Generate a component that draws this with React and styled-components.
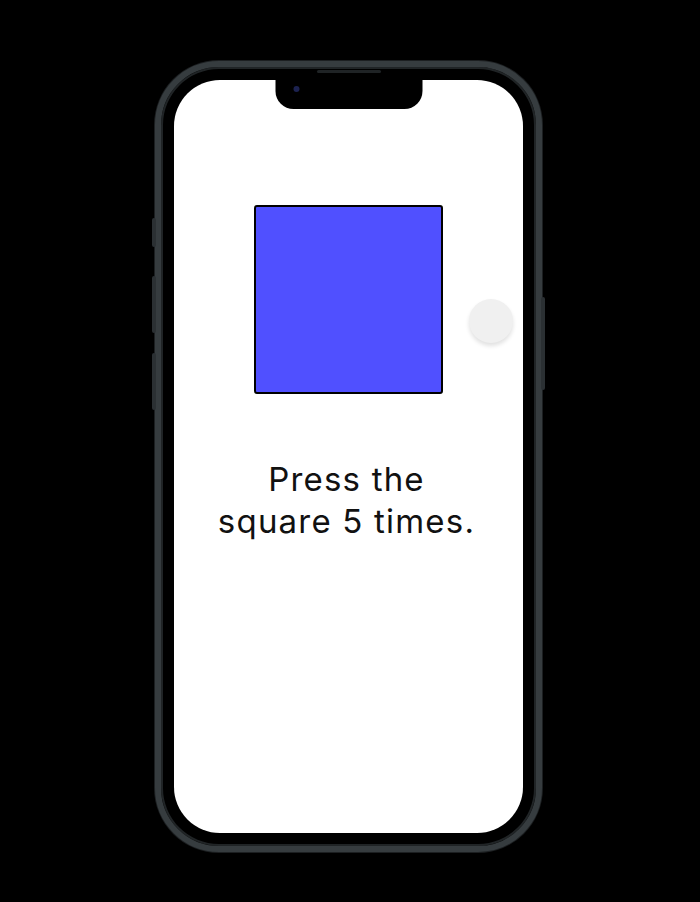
import React from 'react'
import styled, { createGlobalStyle } from 'styled-components'

const GlobalStyle = createGlobalStyle`
  html, body {
    margin: 0;
    padding: 0;
    background: #000;
  }
  body {
    font-family: Inter, "Noto Sans", sans-serif;
  }
`

const Page = styled.div`
  width: 700px;
  height: 902px;
  background: #000;
  display: flex;
  justify-content: center;
  padding-top: 61px;
  box-sizing: border-box;
`

const Phone = styled.div`
  position: relative;
  width: 387px;
  height: 791px;
  margin-right: 3px;
  box-sizing: border-box;
  padding: 13px;
  border-radius: 64px;
  background: #000;
  border: 6px solid #363c3f;
  box-shadow: inset 0 0 0 2px #202426, 0 0 0 1px #1c1f21;
`

const SideButton = styled.span`
  position: absolute;
  width: 4px;
  border-radius: 2px;
  background: #2b3033;
  top: ${p => p.top}px;
  height: ${p => p.h}px;
  ${p => (p.right ? 'right: -9px;' : 'left: -9px;')}
`

const Speaker = styled.span`
  position: absolute;
  top: 3px;
  left: 50%;
  transform: translateX(-50%);
  width: 64px;
  height: 3px;
  border-radius: 2px;
  background: #1f2325;
`

const Screen = styled.div`
  position: relative;
  height: 100%;
  background: #fff;
  border-radius: 46px;
  overflow: hidden;
  display: flex;
  flex-direction: column;
  align-items: center;
`

const Notch = styled.div`
  position: absolute;
  top: 0;
  left: 50%;
  transform: translateX(-50%);
  width: 147px;
  height: 29px;
  background: #000;
  border-radius: 0 0 18px 18px;
`

const Camera = styled.span`
  position: absolute;
  left: 18px;
  top: 6px;
  width: 6px;
  height: 6px;
  border-radius: 50%;
  background: #1c2250;
`

const Square = styled.button`
  margin-top: 125px;
  width: 189px;
  height: 189px;
  background: #5050ff;
  border: 2px solid #000;
  border-radius: 3px;
  padding: 0;
  cursor: pointer;
  flex-shrink: 0;
`

const Knob = styled.div`
  position: absolute;
  left: 295px;
  top: 219px;
  width: 44px;
  height: 44px;
  border-radius: 50%;
  background: #f0f0f0;
  box-shadow: 0 3px 4px rgba(0, 0, 0, 0.12);
`

const Prompt = styled.p`
  margin: 64px 4px 0 0;
  font-family: Inter, "Noto Sans", sans-serif;
  font-size: 33px;
  line-height: 42px;
  letter-spacing: 1.2px;
  font-weight: 400;
  color: #111;
  text-align: center;
  width: 300px;
`

export default function App() {
  return (
    <Page>
      <GlobalStyle />
      <Phone>
        <Speaker />
        <SideButton top={151} h={29} />
        <SideButton top={209} h={57} />
        <SideButton top={286} h={57} />
        <SideButton right top={230} h={93} />
        <Screen>
          <Notch>
            <Camera />
          </Notch>
          <Square aria-label="square" />
          <Knob />
          <Prompt>
            Press the
            <br />
            square 5 times.
          </Prompt>
        </Screen>
      </Phone>
    </Page>
  )
}
